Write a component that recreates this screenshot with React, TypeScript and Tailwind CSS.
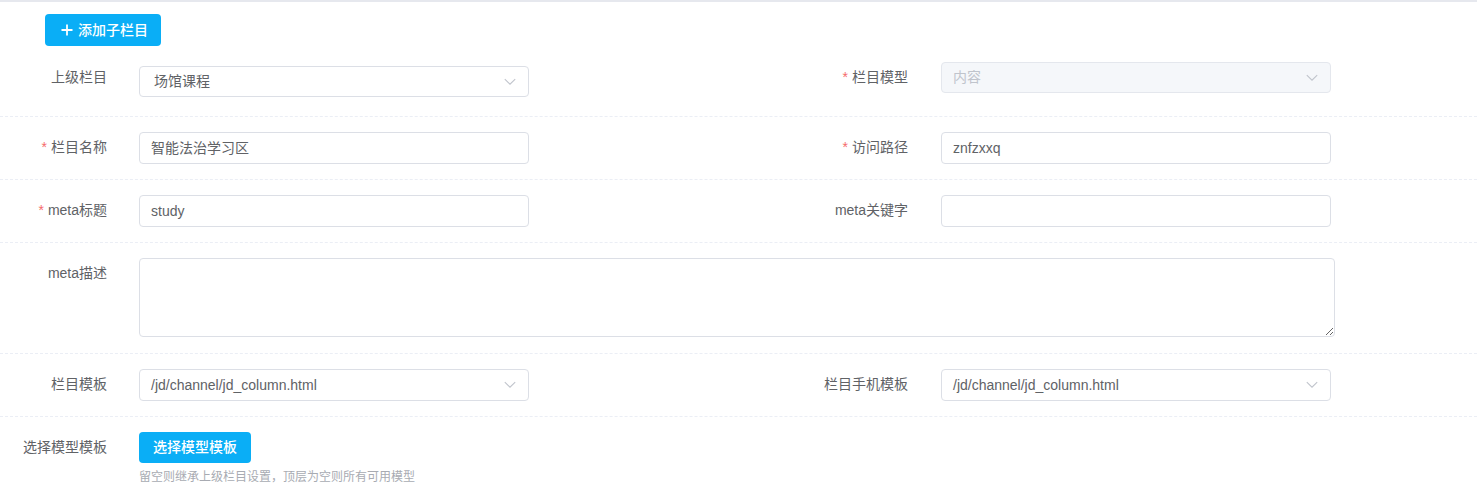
import type React from "react"

const font = { fontFamily: '"Liberation Sans", "Noto Sans CJK SC", sans-serif' }

function Chevron() {
  return (
    <svg width="12" height="8" viewBox="0 0 12 8" fill="none" className="shrink-0" aria-hidden="true">
      <path d="M0.8 1.2 6 6.2 11.2 1.2" stroke="#c0c4cc" strokeWidth="1.1" />
    </svg>
  )
}

function Label({ text, required = false, className = "" }: { text: string; required?: boolean; className?: string }) {
  return (
    <div className={`w-[107px] shrink-0 text-right text-[14px] leading-[31px] text-[#606266] ${className}`}>
      {required && <span className="mr-[4px] text-[#f56c6c]">*</span>}
      {text}
    </div>
  )
}

function Select({ value, disabled = false, className = "" }: { value: string; disabled?: boolean; className?: string }) {
  return (
    <div
      className={`flex w-[390px] items-center justify-between rounded-[4px] border pl-[11px] pr-[12px] text-[14px] ${
        disabled ? "border-[#e4e7ed] bg-[#f5f7fa] text-[#c0c4cc]" : "border-[#dcdfe6] bg-white text-[#606266]"
      } ${className}`}
    >
      <span>{value}</span>
      <Chevron />
    </div>
  )
}

function TextBox({ value = "" }: { value?: string }) {
  return (
    <div className="flex h-[32px] w-[390px] items-center rounded-[4px] border border-[#dcdfe6] bg-white px-[11px] text-[14px] text-[#606266]">
      {value}
    </div>
  )
}

function Row({ children, className = "" }: { children: React.ReactNode; className?: string }) {
  return <div className={`flex border-b border-dashed border-[#ebeef5] ${className}`}>{children}</div>
}

export default function App() {
  return (
    <div className="h-[484px] w-[1477px] overflow-hidden border-t-2 border-[#e6e8ee] bg-white" style={font}>
      <div className="pl-[45px] pt-[12px]">
        <button className="flex h-[32px] items-center gap-[5px] rounded-[4px] bg-[#0aaef6] pl-[16px] pr-[13px] text-[14px] font-medium text-white">
          <svg width="12" height="12" viewBox="0 0 12 12" aria-hidden="true">
            <path d="M6 0.5v11M0.5 6h11" stroke="white" strokeWidth="1.8" />
          </svg>
          添加子栏目
        </button>
      </div>

      <Row className="pb-[19px] pt-[16px]">
        <div className="flex w-[801px] shrink-0">
          <Label text="上级栏目" />
          <Select value="场馆课程" className="ml-[32px] mt-[4px] h-[31px] !pl-[14px]" />
        </div>
        <div className="flex">
          <Label text="栏目模型" required />
          <Select value="内容" disabled className="ml-[33px] h-[31px]" />
        </div>
      </Row>

      <Row className="py-[15px]">
        <div className="flex w-[801px] shrink-0">
          <Label text="栏目名称" required />
          <div className="ml-[32px]">
            <TextBox value="智能法治学习区" />
          </div>
        </div>
        <div className="flex">
          <Label text="访问路径" required />
          <div className="ml-[33px]">
            <TextBox value="znfzxxq" />
          </div>
        </div>
      </Row>

      <Row className="py-[15px]">
        <div className="flex w-[801px] shrink-0">
          <Label text="meta标题" required />
          <div className="ml-[32px]">
            <TextBox value="study" />
          </div>
        </div>
        <div className="flex">
          <Label text="meta关键字" />
          <div className="ml-[33px]">
            <TextBox />
          </div>
        </div>
      </Row>

      <Row className="pb-[16px] pt-[15px]">
        <Label text="meta描述" />
        <textarea
          readOnly
          className="ml-[32px] h-[79px] w-[1196px] rounded-[4px] border border-[#dcdfe6] bg-white outline-none"
        />
      </Row>

      <Row className="py-[15px]">
        <div className="flex w-[801px] shrink-0">
          <Label text="栏目模板" />
          <Select value="/jd/channel/jd_column.html" className="ml-[32px] h-[32px]" />
        </div>
        <div className="flex">
          <Label text="栏目手机模板" />
          <Select value="/jd/channel/jd_column.html" className="ml-[33px] h-[32px]" />
        </div>
      </Row>

      <div className="flex pt-[15px]">
        <Label text="选择模型模板" />
        <div className="ml-[32px] flex flex-col">
          <button className="h-[31px] w-[112px] rounded-[4px] bg-[#0aaef6] text-[14px] font-medium text-white">
            选择模型模板
          </button>
          <div className="mt-[4px] text-[12px] leading-[20px] text-[#a8abb2]">
            留空则继承上级栏目设置，顶层为空则所有可用模型
          </div>
        </div>
      </div>
    </div>
  )
}
